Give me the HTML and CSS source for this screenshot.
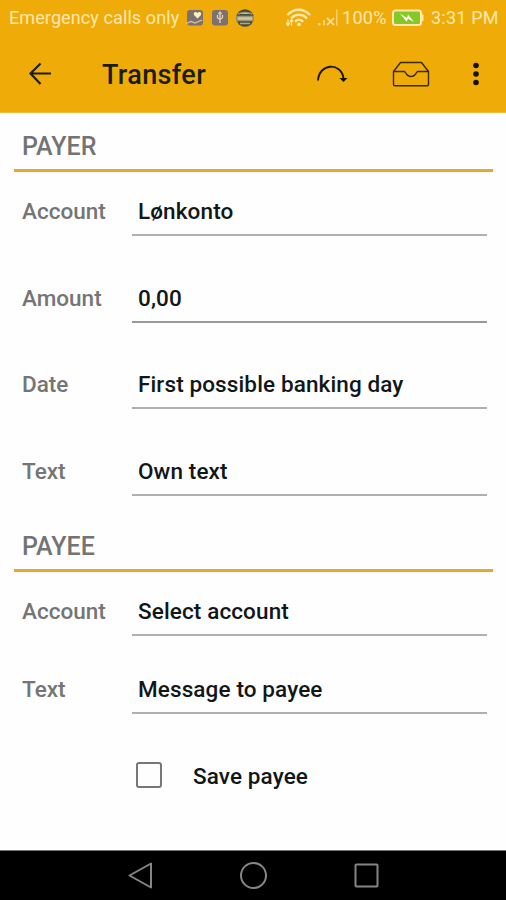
FILE: index.html
```html
<!DOCTYPE html>
<html lang="en">
<head>
<meta charset="utf-8">
<title>Transfer</title>
<link rel="stylesheet" href="styles.css">
</head>
<body>
<div class="screen">
  <div class="status">
    <span class="carrier">Emergency calls only</span>
    <svg class="notices" width="70" height="22" viewBox="0 0 70 22">
      <rect x="2" y="3" width="16" height="15.500" rx="3" fill="#7c7170"/>
      <path d="M12.500 11.500 9 8c-1-3 2-4 3.500-2 1.500-2 4.500-1 3.500 2Z" fill="#fff1b5"/>
      <path d="M1 16.500l5-2 4 1.500 7-3" fill="none" stroke="#d6c4ac" stroke-width="1.300"/>
      <rect x="27" y="3" width="16" height="15.500" rx="3" fill="#7c7170"/>
      <path d="M35 7v9M32.500 8v3l2.500 1.500 2.500-2V8M33.500 7 35 5l1.500 2" fill="none" stroke="#e5d2b2" stroke-width="1.300"/>
      <circle cx="60" cy="11" r="8.800" fill="#484c3f"/>
      <path d="M53 7c4-2 10-2 14 0M52 9.500h16v4H52Z" fill="#d6c49c" stroke="#9b9578" stroke-width="1.500"/>
      <path d="M55 16.500h10" stroke="#b5a67c" stroke-width="1.500"/>
    </svg>
    <svg class="signal" width="54" height="22" viewBox="0 0 54 22">
      <g fill="none" stroke="#ffe7ad" stroke-width="2.300">
        <path d="M1.500 8c6.500-7 16-7 22.500 0"/>
        <path d="M5 11.500c4.500-5 11.500-5 16 0"/>
        <path d="M9 14.700c2.400-2.700 5.600-2.700 8 0"/>
      </g>
      <circle cx="13" cy="17.300" r="1.900" fill="#ffe7ad"/>
      <path d="M2 12.500v5.500M0 15.500l2 3 2-3M5.500 18.500v-6M4 14.500l1.500-2 1.500 2" fill="none" stroke="#ffe7ad" stroke-width="1.300"/>
      <path d="M32 16h2.500v2.500H32ZM37 13h2v5.500h-2ZM50 2.500h1.500V18.500H50Z" fill="#f7cf69"/>
      <path d="m41 11 7 7m0-7-7 7" stroke="#ffe3a0" stroke-width="1.700"/>
    </svg>
    <span class="percent">100%</span>
    <svg class="battery" width="34" height="20" viewBox="0 0 34 20">
      <rect x="2" y="2.500" width="28" height="14.500" rx="2.500" fill="#85c928" stroke="#ffe7ad" stroke-width="2"/>
      <path d="M31 6.500h1.500v6.500H31Z" fill="#ffe7ad"/>
      <path d="m9 5.500 7 4.500 1-3.500 6 7.500-6-3.200-1.500 3Z" fill="#fffbe4"/>
    </svg>
    <span class="clock">3:31 PM</span>
  </div>
  <header class="appbar">
    <svg class="back" width="26" height="26" viewBox="0 0 26 26"><path d="M24 12.500H3.500M13.500 2.500 3.500 12.500 13.500 23" fill="none" stroke="#1c1d12" stroke-width="2.200"/></svg>
    <h1>Transfer</h1>
    <svg class="redo" width="34" height="20" viewBox="0 0 34 20"><path d="M2 16.500C3-1 25-2 27.500 14" fill="none" stroke="#1c1606" stroke-width="1.900"/><path d="M23.500 14h8l-4 4Z" fill="#140f02"/></svg>
    <svg class="tray" width="38" height="28" viewBox="0 0 38 28"><g fill="none" stroke="#392a03" stroke-width="1.400" stroke-linejoin="round"><path d="M1.500 11.500 8.500 2.500h21l7 9v13a1.300 1.300 0 0 1-1.300 1.300H2.800a1.300 1.300 0 0 1-1.300-1.300Z"/><path d="M1.500 11.500h11c1 0 1.500 5 6.500 5s5.500-5 6.500-5h11"/></g></svg>
    <svg class="more" width="8" height="26" viewBox="0 0 8 26" fill="#141103"><circle cx="4" cy="4.500" r="2.800"/><circle cx="4" cy="13" r="2.800"/><circle cx="4" cy="21.500" r="2.800"/></svg>
  </header>
  <main>
    <h2>PAYER</h2>
    <div class="row first"><span class="label">Account</span><span class="field">Lønkonto</span></div>
    <div class="row"><span class="label">Amount</span><span class="field active">0,00</span></div>
    <div class="row"><span class="label">Date</span><span class="field">First possible banking day</span></div>
    <div class="row"><span class="label">Text</span><span class="field">Own text</span></div>
    <h2 class="payee">PAYEE</h2>
    <div class="row first"><span class="label">Account</span><span class="field">Select account</span></div>
    <div class="row message"><span class="label">Text</span><span class="field">Message to payee</span></div>
    <div class="save"><span class="box"></span><span>Save payee</span></div>
  </main>
  <nav>
    <svg width="28" height="30" viewBox="0 0 28 30"><path d="M24 2.500v24L2.500 14.500Z"/></svg>
    <svg width="30" height="30" viewBox="0 0 30 30"><circle cx="14.500" cy="14.500" r="12.500"/></svg>
    <svg width="28" height="30" viewBox="0 0 28 30"><rect x="2.500" y="3.500" width="22" height="22" rx="1"/></svg>
  </nav>
</div>
</body>
</html>
```
FILE: styles.css
```css
* { box-sizing: border-box; }
body { margin: 0; font-family: Roboto, "Liberation Sans", sans-serif; background: #fff; }
svg { display: block; flex: none; }
.screen { width: 506px; height: 900px; display: flex; flex-direction: column; overflow: hidden; background: #fefefe; }
.status {
  height: 36px; flex: none; background: #efac08; color: #ffe7ad;
  display: flex; align-items: center; padding-left: 9px;
  font-size: 18px; line-height: 36px; white-space: nowrap;
}
.carrier { width: 176px; letter-spacing: 0.1px; }
.notices { margin-right: 31px; }
.signal { margin-right: 2px; }
.percent { width: 49px; letter-spacing: 0.3px; }
.battery { margin-right: 6px; }
.clock { letter-spacing: 0.2px; }
.appbar {
  height: 77px; flex: none; background: #efac08; color: #1c1d12;
  display: flex; align-items: center; padding-left: 27px; border-bottom: 1px solid #f3bc3d;
}
h1 { margin: 2px 0 0 49px; width: 214px; font-size: 27px; font-weight: 500; line-height: 74px; letter-spacing: 0.35px; }
.redo { margin-right: 42px; }
.tray { margin-right: 42px; }
main { flex: 1; padding: 0 13px 0 14px; font-size: 22.500px; letter-spacing: 0.12px; font-weight: 500; }
h2 {
  margin: 0; height: 59px; border-bottom: 3px solid #e7a82e; padding: 18px 8px 0;
  font-size: 25px; line-height: 32px; font-weight: 500; letter-spacing: 0; color: #747474;
}
.payee { height: 76px; padding-top: 35px; }
.row { display: flex; align-items: flex-end; height: 86.700px; padding: 0 6px 0 8px; line-height: 32px; }
.row.first { height: 64px; }
.row.message { height: 78px; }
.label { width: 110px; padding-bottom: 9px; letter-spacing: 0; color: #757575; }
.field { flex: 1; padding: 0 6px 7px; border-bottom: 2px solid #b0b0b0; color: #111719; }
.field.active { border-color: #999; }
.save { display: flex; align-items: center; height: 32px; margin: 45px 0 0 122px; gap: 31px; color: #111719; }
.box { width: 26px; height: 26px; border: 2px solid #777; border-radius: 3px; }
.save span:last-child { padding-top: 2px; }
nav {
  height: 50px; flex: none; background: #000; border-top: 1px solid #777;
  display: flex; align-items: center; justify-content: center; gap: 84px; padding-left: 1px;
  fill: none; stroke: #858585; stroke-width: 2; stroke-linejoin: round;
}
```
